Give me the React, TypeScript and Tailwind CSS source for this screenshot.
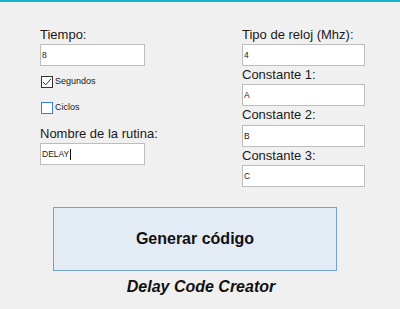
import React from "react";

const Label = ({ text, h = "h-[18px]" }: { text: string; h?: string }) => (
  <div className={`${h} text-[13px] leading-[18px] text-[#1a1a1a] whitespace-nowrap`}>{text}</div>
);

const Field = ({ value, caret = false }: { value: string; caret?: boolean }) => (
  <div className="h-[22px] w-full bg-white border border-[#bdbdbd] flex items-center pl-[1px] text-[8.5px] text-[#1a1a1a]">
    <span>{value}</span>
    {caret && <span className="ml-[1px] w-px h-[11px] bg-[#111]" />}
  </div>
);

const Check = ({ label, checked }: { label: string; checked?: boolean }) => (
  <div className="h-[12px] flex items-center gap-[2px] pl-[1px]">
    <div
      className={`w-[12px] h-[12px] bg-white border flex items-center justify-center ${
        checked ? "border-[#333]" : "border-[#3b7de0]"
      }`}
    >
      {checked && (
        <svg width="10" height="10" viewBox="0 0 10 10">
          <polyline points="1,5 3.8,7.8 9,1.8" fill="none" stroke="#333" strokeWidth="1" />
        </svg>
      )}
    </div>
    <span className="text-[9px] text-[#1a1a1a]">{label}</span>
  </div>
);

export default function App() {
  return (
    <div className="w-[400px] h-[309px] bg-[#f0f0f0] font-['Liberation_Sans',Arial,sans-serif] overflow-hidden">
      <div className="h-[2px] bg-[#17b3c5]" />
      <div className="flex pl-[40px] pt-[24px]">
        <div className="w-[105px] flex flex-col">
          <Label text="Tiempo:" />
          <Field value="8" />
          <div className="mt-[10px]">
            <Check label="Segundos" checked />
          </div>
          <div className="mt-[14px]">
            <Check label="Ciclos" />
          </div>
          <div className="mt-[11px]">
            <Label text="Nombre de la rutina:" />
          </div>
          <Field value="DELAY" caret />
        </div>
        <div className="ml-[97px] w-[123px] flex flex-col">
          <Label text="Tipo de reloj (Mhz):" />
          <Field value="4" />
          <Label text="Constante 1:" />
          <Field value="A" />
          <Label text="Constante 2:" h="h-[19px]" />
          <Field value="B" />
          <Label text="Constante 3:" />
          <Field value="C" />
        </div>
      </div>
      <button className="mt-[20px] ml-[53px] w-[284px] h-[64px] bg-[#e3ebf4] border border-[#72a1d8] flex items-center justify-center text-[16px] font-bold text-[#111]">
        Generar código
      </button>
      <div className="mt-[7px] text-center pl-[2px] text-[16px] leading-[18px] font-bold italic text-[#111]">
        Delay Code Creator
      </div>
    </div>
  );
}
